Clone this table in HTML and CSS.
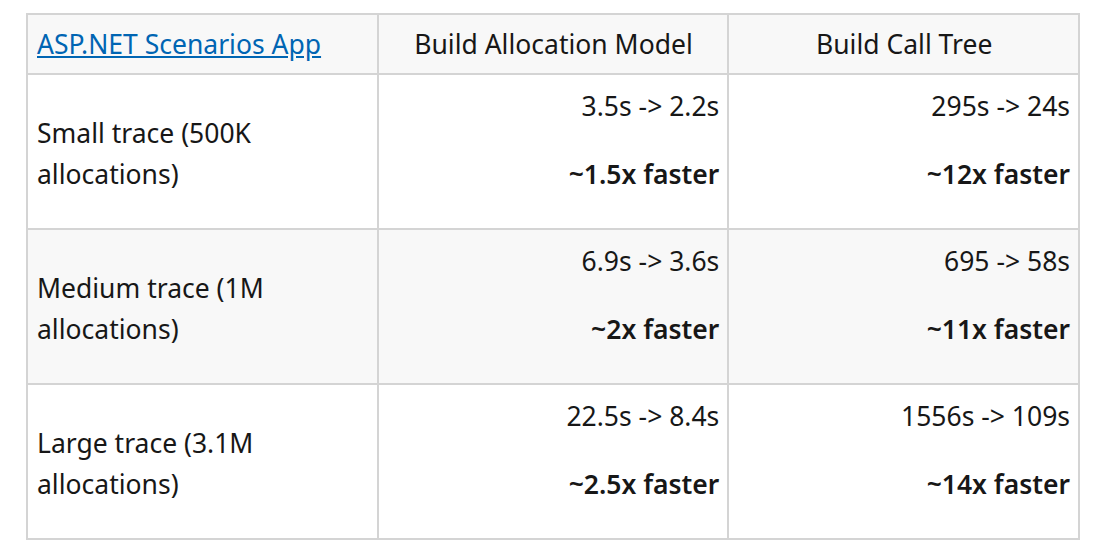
FILE: index.html
```html
<!DOCTYPE html>
<html lang="en">
<head>
<meta charset="utf-8">
<title>Allocation performance</title>
<link rel="stylesheet" href="styles.css">
</head>
<body>
<table class="perf">
  <thead>
    <tr>
      <th class="first"><a href="#">ASP.NET Scenarios App</a></th>
      <th>Build Allocation Model</th>
      <th>Build Call Tree</th>
    </tr>
  </thead>
  <tbody>
    <tr>
      <td class="label">Small trace (500K allocations)</td>
      <td class="num"><p>3.5s -&gt; 2.2s</p><p><strong>~1.5x faster</strong></p></td>
      <td class="num"><p>295s -&gt; 24s</p><p><strong>~12x faster</strong></p></td>
    </tr>
    <tr>
      <td class="label">Medium trace (1M allocations)</td>
      <td class="num"><p>6.9s -&gt; 3.6s</p><p><strong>~2x faster</strong></p></td>
      <td class="num"><p>695 -&gt; 58s</p><p><strong>~11x faster</strong></p></td>
    </tr>
    <tr>
      <td class="label">Large trace (3.1M allocations)</td>
      <td class="num"><p>22.5s -&gt; 8.4s</p><p><strong>~2.5x faster</strong></p></td>
      <td class="num"><p>1556s -&gt; 109s</p><p><strong>~14x faster</strong></p></td>
    </tr>
  </tbody>
</table>
</body>
</html>
```
FILE: styles.css
```css
html, body {
  margin: 0;
  padding: 0;
  background: #ffffff;
}
body {
  padding: 13px 0 0 26px;
  font-family: "Noto Sans", "Open Sans", sans-serif;
  font-size: 26.5px;
  line-height: 41px;
  color: #171717;
}
.perf {
  width: 1054px;
  table-layout: fixed;
  border-collapse: collapse;
}
.perf th,
.perf td {
  border: 2px solid #d4d4d4;
  padding: 9px 8px 9px 9px;
}
.perf th {
  background: #f8f8f8;
  font-weight: 400;
  text-align: center;
  padding-top: 9px;
  padding-bottom: 8px;
}
.perf th.first {
  text-align: left;
}
.perf a {
  color: #0065b3;
  text-decoration: underline;
  text-underline-offset: 2px;
}
.perf tbody tr:nth-child(2) td {
  background: #f8f8f8;
}
.perf td {
  vertical-align: middle;
}
.perf td.label {
  padding-top: 13px;
  padding-bottom: 9px;
}
.perf td.num {
  text-align: right;
  vertical-align: top;
  padding-top: 11px;
}
.perf td p {
  margin: 0 0 27px 0;
}
.perf td p:last-child {
  margin-bottom: 24px;
}
.perf strong {
  font-weight: 600;
}
```
